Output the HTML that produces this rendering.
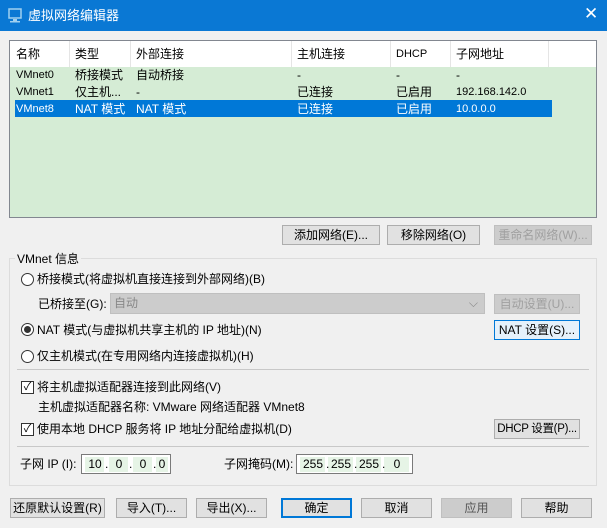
<!DOCTYPE html>
<html><head><meta charset="utf-8"><style>
*{box-sizing:border-box;margin:0;padding:0}
body{width:607px;height:528px;background:#f0f0f0;font:12px/16px "Liberation Sans","Noto Sans CJK SC",sans-serif;color:#000;position:relative;overflow:hidden}
.a{position:absolute;white-space:nowrap;line-height:16px}
.title{left:0;top:0;width:607px;height:31px;background:#0a78d4;color:#fff;font-size:13px}
.btn{position:absolute;background:#e1e1e1;border:1px solid #adadad;text-align:center;line-height:18px;height:20px;white-space:nowrap;overflow:hidden}
.dis{color:#a0a0a0;background:#cccccc;border-color:#bfbfbf}
.rad{position:absolute;width:13px;height:13px;border:1px solid #333;border-radius:50%;background:#fff}
.chk{position:absolute;width:13px;height:13px;border:1px solid #333;background:#fff;font-size:11px;line-height:11px;text-align:center}
.fld{position:absolute;background:#fff;border:1px solid #7a7a7a;height:20px}
.cell{position:absolute;top:2px;height:15px;background:#e6f4e6}
.n{position:absolute;top:1px;width:20px;text-align:center;line-height:16px}
.d{position:absolute;top:1px;line-height:16px}
</style></head><body>
<div class="a title">
 <svg class="a" style="left:8px;top:8px" width="14" height="16"><rect x="1" y="1" width="12" height="9" fill="none" stroke="#9fd0f0" stroke-width="1.5"/><rect x="5" y="11" width="4" height="2" fill="#9fd0f0"/><rect x="2" y="13" width="10" height="1.5" fill="#9fd0f0"/></svg>
 <span class="a" style="left:28px;top:8px">虚拟网络编辑器</span>
 <span class="a" style="left:584px;top:6px;font-size:17px">✕</span>
</div>
<div class="a" style="left:9px;top:40px;width:588px;height:178px;background:#d5ecd5;border:1px solid #828790"></div>
<div class="a" style="left:10px;top:41px;width:586px;height:26px;background:#fff"></div>
<div class="a" style="left:69px;top:41px;width:1px;height:26px;background:#e5e5e5"></div>
<div class="a" style="left:130px;top:41px;width:1px;height:26px;background:#e5e5e5"></div>
<div class="a" style="left:291px;top:41px;width:1px;height:26px;background:#e5e5e5"></div>
<div class="a" style="left:390px;top:41px;width:1px;height:26px;background:#e5e5e5"></div>
<div class="a" style="left:450px;top:41px;width:1px;height:26px;background:#e5e5e5"></div>
<div class="a" style="left:548px;top:41px;width:1px;height:26px;background:#e5e5e5"></div>
<div class="a" style="left:15px;top:100px;width:537px;height:17px;background:#0078d7"></div>
<div class="a" style="left:16px;top:46px">名称</div><div class="a" style="left:75px;top:46px">类型</div><div class="a" style="left:136px;top:46px">外部连接</div><div class="a" style="left:297px;top:46px">主机连接</div><div class="a" style="left:396px;top:46px;font-size:11px">DHCP</div><div class="a" style="left:456px;top:46px">子网地址</div>
<div class="a" style="left:16px;top:67px;font-size:11px">VMnet0</div><div class="a" style="left:75px;top:67px">桥接模式</div><div class="a" style="left:136px;top:67px">自动桥接</div><div class="a" style="left:297px;top:67px">-</div><div class="a" style="left:396px;top:67px">-</div><div class="a" style="left:456px;top:67px">-</div>
<div class="a" style="left:16px;top:84px;font-size:11px">VMnet1</div><div class="a" style="left:75px;top:84px">仅主机...</div><div class="a" style="left:136px;top:84px">-</div><div class="a" style="left:297px;top:84px">已连接</div><div class="a" style="left:396px;top:84px">已启用</div><div class="a" style="left:456px;top:84px;font-size:11px">192.168.142.0</div>
<div style="color:#fff"><div class="a" style="left:16px;top:101px;font-size:11px">VMnet8</div><div class="a" style="left:75px;top:101px">NAT 模式</div><div class="a" style="left:136px;top:101px">NAT 模式</div><div class="a" style="left:297px;top:101px">已连接</div><div class="a" style="left:396px;top:101px">已启用</div><div class="a" style="left:456px;top:101px;font-size:11px">10.0.0.0</div></div>
<div class="btn" style="left:282px;top:225px;width:98px">添加网络(E)...</div>
<div class="btn" style="left:387px;top:225px;width:93px">移除网络(O)</div>
<div class="btn dis" style="left:494px;top:225px;width:98px">重命名网络(W)...</div>
<div class="a" style="left:9px;top:258px;width:588px;height:228px;border:1px solid #dcdcdc"></div>
<div class="a" style="left:15px;top:251px;background:#f0f0f0;padding:0 2px">VMnet 信息</div>
<div class="rad" style="left:21px;top:273px"></div><div class="a" style="left:37px;top:271px">桥接模式(将虚拟机直接连接到外部网络)(B)</div>
<div class="a" style="left:38px;top:296px">已桥接至(G):</div>
<div class="a" style="left:110px;top:293px;width:375px;height:21px;background:#ccc;border:1px solid #bfbfbf;color:#888;padding:1px 3px">自动<span style="position:absolute;right:6px;top:1px">⌵</span></div>
<div class="btn dis" style="left:494px;top:294px;width:86px">自动设置(U)...</div>
<div class="rad" style="left:21px;top:323px"><div style="position:absolute;left:2px;top:2px;width:7px;height:7px;border-radius:50%;background:#333"></div></div><div class="a" style="left:37px;top:322px">NAT 模式(与虚拟机共享主机的 IP 地址)(N)</div>
<div class="btn" style="left:494px;top:320px;width:86px;border-color:#0078d7;background:#e5f1fb">NAT 设置(S)...</div>
<div class="rad" style="left:21px;top:350px"></div><div class="a" style="left:37px;top:348px">仅主机模式(在专用网络内连接虚拟机)(H)</div>
<div class="a" style="left:17px;top:369px;width:572px;height:1px;background:#c8c8c8"></div>
<div class="chk" style="left:21px;top:381px">✓</div><div class="a" style="left:37px;top:379px">将主机虚拟适配器连接到此网络(V)</div>
<div class="a" style="left:38px;top:399px">主机虚拟适配器名称: VMware 网络适配器 VMnet8</div>
<div class="chk" style="left:21px;top:423px">✓</div><div class="a" style="left:37px;top:421px">使用本地 DHCP 服务将 IP 地址分配给虚拟机(D)</div>
<div class="btn" style="left:494px;top:419px;width:86px;font-size:11.5px;letter-spacing:-0.3px">DHCP 设置(P)...</div>
<div class="a" style="left:17px;top:446px;width:572px;height:1px;background:#c8c8c8"></div>
<div class="a" style="left:20px;top:456px">子网 IP (I):</div>
<div class="fld" style="left:81px;top:454px;width:90px"><div class="cell" style="left:3px;width:19px"></div><div class="cell" style="left:27px;width:19px"></div><div class="cell" style="left:51px;width:19px"></div><div class="cell" style="left:74px;width:12px"></div>
<span class="n" style="left:3px">10</span><span class="d" style="left:23px">.</span><span class="n" style="left:27px">0</span><span class="d" style="left:47px">.</span><span class="n" style="left:51px">0</span><span class="d" style="left:71px">.</span><span class="n" style="left:72px;width:16px">0</span></div>
<div class="a" style="left:224px;top:456px">子网掩码(M):</div>
<div class="fld" style="left:296px;top:454px;width:117px"><div class="cell" style="left:3px;width:25px"></div><div class="cell" style="left:31px;width:25px"></div><div class="cell" style="left:59px;width:25px"></div><div class="cell" style="left:87px;width:25px"></div>
<span class="n" style="left:4px;width:24px">255</span><span class="d" style="left:29px">.</span><span class="n" style="left:32px;width:24px">255</span><span class="d" style="left:57px">.</span><span class="n" style="left:60px;width:24px">255</span><span class="d" style="left:85px">.</span><span class="n" style="left:88px;width:24px">0</span></div>
<div class="btn" style="left:10px;top:498px;width:95px">还原默认设置(R)</div>
<div class="btn" style="left:116px;top:498px;width:71px">导入(T)...</div>
<div class="btn" style="left:196px;top:498px;width:71px">导出(X)...</div>
<div class="btn" style="left:281px;top:498px;width:71px;border:2px solid #0078d7;line-height:16px">确定</div>
<div class="btn" style="left:361px;top:498px;width:71px">取消</div>
<div class="btn dis" style="left:441px;top:498px;width:71px;color:#555">应用</div>
<div class="btn" style="left:521px;top:498px;width:71px">帮助</div>
</body></html>
